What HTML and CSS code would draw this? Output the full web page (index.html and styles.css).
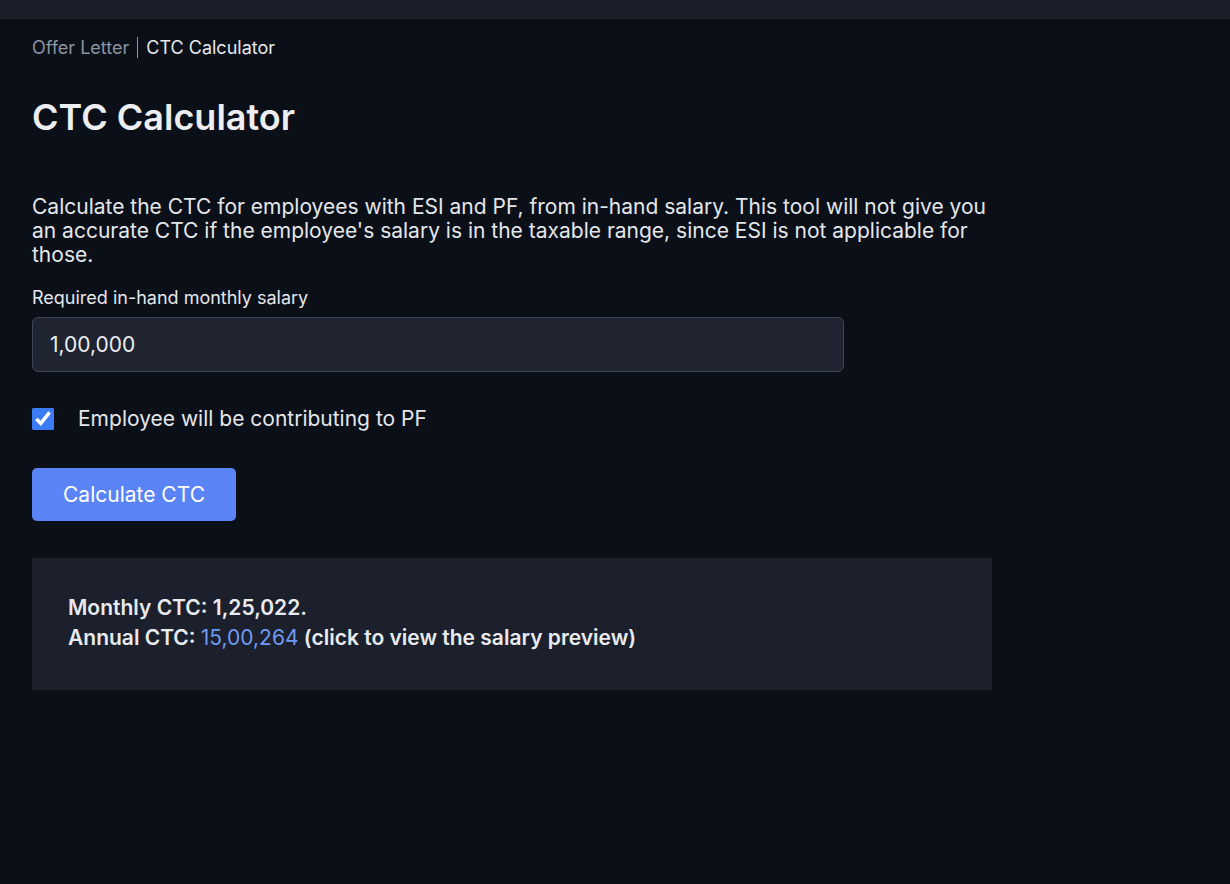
FILE: index.html
```html
<!DOCTYPE html>
<html>
<head>
<meta charset="utf-8">
<link rel="stylesheet" href="styles.css">
</head>
<body>
<div class="topbar"></div>
<main class="page">
  <nav class="crumbs"><span class="crumb-muted">Offer Letter</span><span class="crumb-sep"></span><span class="crumb-current">CTC Calculator</span></nav>
  <h1 class="title">CTC Calculator</h1>
  <p class="intro">Calculate the CTC for employees with ESI and PF, from in-hand salary. This tool will not give you an accurate CTC if the employee's salary is in the taxable range, since ESI is not applicable for those.</p>
  <label class="field-label" for="salary">Required in-hand monthly salary</label>
  <input class="field-input" id="salary" type="text" value="1,00,000">
  <label class="check-row">
    <input type="checkbox" class="check" checked>
    <span class="check-text">Employee will be contributing to PF</span>
  </label>
  <button class="btn">Calculate CTC</button>
  <section class="result">
    <div class="result-line">Monthly CTC: 1,25,022.</div>
    <div class="result-line">Annual CTC: <a class="result-link" href="#">15,00,264</a> (click to view the salary preview)</div>
  </section>
</main>
</body>
</html>
```
FILE: styles.css
```css
* { box-sizing: border-box; }
html, body { margin: 0; padding: 0; }
body {
  background: #0b1018;
  color: #e6e8ec;
  font-family: Inter, "Noto Sans", sans-serif;
  min-height: 884px;
}
.topbar {
  height: 19px;
  background: #1a1f2a;
}
.page {
  width: 960px;
  margin-left: 32px;
  display: flex;
  flex-direction: column;
  align-items: flex-start;
}
.crumbs {
  margin-top: 18px;
  font-size: 18px;
  line-height: 20px;
  display: flex;
  align-items: center;
}
.crumb-muted { color: #8b93a3; }
.crumb-sep {
  width: 1px;
  height: 21px;
  background: #8b93a3;
  margin: 0 8px 0 8px;
}
.crumb-current { color: #e6e8ec; }
.title {
  margin: 37px 0 0 0;
  font-size: 36px;
  line-height: 44px;
  font-weight: 600;
  color: #eceef2;
}
.intro {
  margin: 56px 0 0 0;
  font-size: 21px;
  line-height: 24px;
  color: #e4e6ea;
}
.field-label {
  margin-top: 20px;
  font-size: 18px;
  line-height: 22px;
  color: #e4e6ea;
}
.field-input {
  margin-top: 8px;
  width: 812px;
  height: 55px;
  background: #1f2430;
  border: 1px solid #3c445a;
  border-radius: 6px;
  color: #eceef2;
  font-family: inherit;
  font-size: 21px;
  padding: 0 17px;
  outline: none;
}
.check-row {
  margin-top: 35px;
  display: flex;
  align-items: center;
  gap: 24px;
}
.check {
  margin: 0;
  width: 22px;
  height: 22px;
  accent-color: #3b7cf4;
}
.check-text {
  font-size: 21px;
  line-height: 24px;
  color: #e4e6ea;
}
.btn {
  margin-top: 37px;
  width: 204px;
  height: 53px;
  background: #5a83f5;
  border: none;
  border-radius: 5px;
  color: #ffffff;
  font-family: inherit;
  font-size: 21px;
}
.result {
  margin-top: 37px;
  width: 960px;
  height: 132px;
  background: #1b202c;
  padding: 35px 36px;
  display: flex;
  flex-direction: column;
}
.result-line {
  font-size: 21px;
  line-height: 30px;
  font-weight: 600;
  color: #e8eaee;
}
.result-link {
  color: #6e9af2;
  font-weight: 400;
  text-decoration: none;
}
```
